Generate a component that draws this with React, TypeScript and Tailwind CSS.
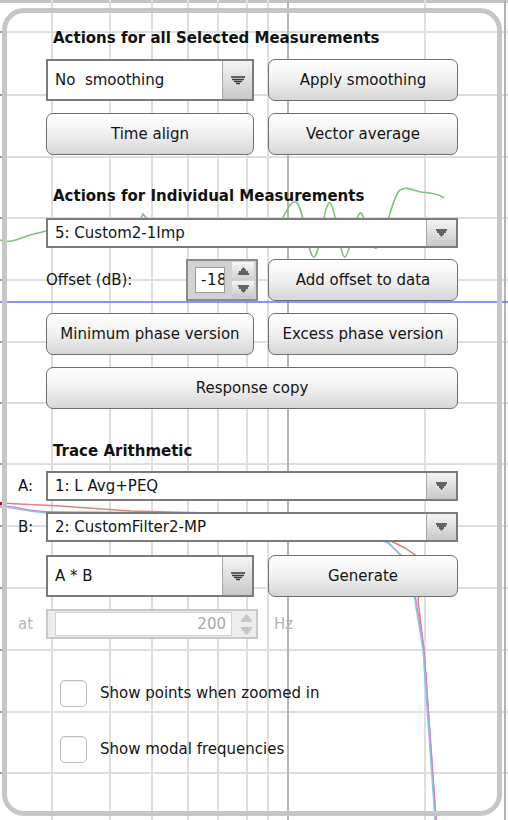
import React from 'react';

const font = {fontFamily: '"DejaVu Sans", "Liberation Sans", sans-serif'};

const hLines = [32, 95, 157, 218, 280, 342, 403, 464, 526, 588, 650, 712, 773];
const vLines = [52, 110, 152, 188, 218, 247, 268, 425];

const Graph: React.FC = () => (
    <svg className="absolute inset-0" width={508} height={820} viewBox="0 0 508 820">
        <rect x={0} y={0} width={508} height={3} fill="#c4c4c4"/>
        {hLines.map((y) => (
            <g key={y}>
                <line x1={0} y1={y} x2={508} y2={y} stroke="#dedede" strokeWidth={2}/>
                <line x1={0} y1={y} x2={3} y2={y} stroke="#9a9a9a" strokeWidth={2}/>
            </g>
        ))}
        {vLines.map((x) => (
            <line key={x} x1={x} y1={0} x2={x} y2={820} stroke="#dedede" strokeWidth={2}/>
        ))}
        <line x1={288} y1={0} x2={288} y2={820} stroke="#b4b4b4" strokeWidth={2}/>
        <line x1={505} y1={0} x2={505} y2={820} stroke="#b4b4b4" strokeWidth={2}/>
        <line x1={0} y1={302} x2={508} y2={302} stroke="#6a6aff" strokeWidth={1.5}/>
        <path
            d="M0 240 C 10 244, 20 238, 30 235 L46 231 L140 220 L143 214 L148 220 L280 222 C 286 214, 290 200, 296 202 C 304 206, 308 258, 314 257 C 320 256, 324 200, 330 203 C 336 206, 340 258, 345 257 C 350 255, 356 210, 361 213 C 366 216, 370 250, 376 248 C 384 245, 392 195, 400 190 C 406 186, 412 190, 421 192 C 428 193, 436 192, 444 198"
            fill="none" stroke="#7cc47c" strokeWidth={1.6}/>
        <path d="M0 503 L60 506 L130 511 L250 514 L340 520 L385 538 L405 548 L418 557 L422 580 L418 600 L424 650 L436 820"
              fill="none" stroke="#e08080" strokeWidth={1.5}/>
        <path d="M0 506 C 20 506, 30 513, 60 512 L200 513 L340 522 L388 543 L404 558 L415 595 L424 650 L436 820"
              fill="none" stroke="#d27ee6" strokeWidth={1.5}/>
        <path d="M0 507 C 20 507, 30 514, 60 513 L200 514 L340 523 L389 543 L403 558 L414 595 L423 650 L435 820"
              fill="none" stroke="#8cc6e2" strokeWidth={1.5}/>
        <rect x={0} y={502} width={3} height={3} fill="#a02020"/>
    </svg>
);

const Arrow: React.FC<{big?: boolean; up?: boolean; faded?: boolean}> = ({big, up, faded}) => {
    const w = big ? 14 : 11;
    const color = faded ? '#b8b8b8' : '#3a3a3a';
    const rows = big
        ? [[0, 14, 1], [1, 13, 3.5], [3, 11, 5.5], [5, 9, 7.5]]
        : [[0, 11, 1], [1, 10, 3], [3, 8, 5], [4.5, 6.5, 6.6]];
    return (
        <svg width={w} height={big ? 9 : 8} viewBox={`0 0 ${w} ${big ? 9 : 8}`}
             style={up ? {transform: 'scaleY(-1)'} : undefined}>
            {rows.map(([a, b, y], i) => (
                <line key={i} x1={a} y1={y} x2={b} y2={y} stroke={color} strokeWidth={1.5}/>
            ))}
        </svg>
    );
};

const Btn: React.FC<{children: React.ReactNode; className?: string}> = ({children, className = ''}) => (
    <div
        className={`h-[42px] rounded-[7px] border-[1.5px] border-[#6f6f6f] bg-linear-to-b from-white via-[#f0f0f0] to-[#d6d6d6] flex items-center justify-center text-[15px] text-[#141414] ${className}`}>
        {children}
    </div>
);

const Combo: React.FC<{label: string; big?: boolean; className?: string}> = ({label, big, className = ''}) => (
    <div
        className={`${big ? 'h-[42px]' : 'h-[30px]'} border-2 border-[#7b7b7b] bg-white flex items-stretch ${className}`}>
        <div className="flex-1 flex items-center pl-[7px] text-[15px] text-[#141414] whitespace-pre">{label}</div>
        <div
            className="w-[30px] border-l border-[#a9a9a9] bg-linear-to-b from-[#f4f4f4] to-[#c9c9c9] flex items-center justify-center">
            <Arrow big={big}/>
        </div>
    </div>
);

const Check: React.FC<{label: string}> = ({label}) => (
    <div className="flex items-center h-[27px] ml-[14px]">
        <div className="w-[27px] h-[27px] rounded-[5px] border border-[#bdbdbd] bg-white shadow-[inset_0_1px_1px_rgba(0,0,0,0.08)]"/>
        <span className="ml-[13px] text-[15px] text-[#141414]">{label}</span>
    </div>
);

const App: React.FC = () => {
    return (
        <div className="relative w-[508px] h-[820px] overflow-hidden bg-white" style={font}>
            <Graph/>
            <div
                className="relative ml-[2px] mt-[8px] w-[500px] h-[808px] rounded-[22px] border-[5px] border-[#c6c6c6] pl-[39px] pr-[39px] pt-[15px]">
                <div className="text-[15px] font-bold text-[#111] leading-[20px] pl-[7px]">
                    Actions for all Selected Measurements
                </div>
                <div className="flex gap-[14px] mt-[11px]">
                    <Combo label="No  smoothing" big className="w-[208px]"/>
                    <Btn className="flex-1">Apply smoothing</Btn>
                </div>
                <div className="flex gap-[14px] mt-[12px]">
                    <Btn className="w-[208px]">Time align</Btn>
                    <Btn className="flex-1">Vector average</Btn>
                </div>

                <div className="text-[15px] font-bold text-[#111] leading-[20px] pl-[7px] mt-[31px]">
                    Actions for Individual Measurements
                </div>
                <Combo label="5: Custom2-1Imp" className="mt-[12px]"/>
                <div className="flex items-center mt-[11px]">
                    <span className="w-[140px] text-[15px] text-[#141414]">Offset (dB):</span>
                    <div className="w-[72px] h-[42px] border-2 border-[#8a8a8a] bg-[#d2d2d2] flex items-center pl-[7px]">
                        <div
                            className="w-[30px] h-[26px] bg-white border border-[#9c9c9c] overflow-hidden flex items-center pl-[5px] text-[15px] text-[#141414] whitespace-nowrap tracking-[0.5px]">
                            -18
                        </div>
                        <div className="ml-[7px] w-[22px] h-[36px] flex flex-col gap-[1px]">
                            <div className="flex-1 bg-linear-to-b from-[#f6f6f6] to-[#cfcfcf] flex items-center justify-center">
                                <Arrow up/>
                            </div>
                            <div className="flex-1 bg-linear-to-b from-[#f6f6f6] to-[#c6c6c6] flex items-center justify-center">
                                <Arrow/>
                            </div>
                        </div>
                    </div>
                    <Btn className="flex-1 ml-[10px]">Add offset to data</Btn>
                </div>
                <div className="flex gap-[14px] mt-[12px]">
                    <Btn className="w-[208px]">Minimum phase version</Btn>
                    <Btn className="flex-1">Excess phase version</Btn>
                </div>
                <Btn className="mt-[12px]">Response copy</Btn>

                <div className="text-[15px] font-bold text-[#111] leading-[20px] pl-[7px] mt-[32px]">
                    Trace Arithmetic
                </div>
                <div className="flex items-center -ml-[28px] mt-[10px]">
                    <span className="w-[28px] text-[15px] text-[#141414]">A:</span>
                    <Combo label="1: L Avg+PEQ" className="flex-1"/>
                </div>
                <div className="flex items-center -ml-[28px] mt-[11px]">
                    <span className="w-[28px] text-[15px] text-[#141414]">B:</span>
                    <Combo label="2: CustomFilter2-MP" className="flex-1"/>
                </div>
                <div className="flex gap-[14px] mt-[13px]">
                    <Combo label="A * B" big className="w-[208px]"/>
                    <Btn className="flex-1">Generate</Btn>
                </div>
                <div className="flex items-center -ml-[28px] mt-[12px]">
                    <span className="w-[28px] text-[15px] text-[#b4b4b4]">at</span>
                    <div className="w-[212px] h-[30px] border-2 border-[#c9c9c9] bg-[#ededed] flex items-center pl-[7px]">
                        <div
                            className="w-[177px] h-[24px] bg-white border border-[#d4d4d4] flex items-center justify-end pr-[5px] text-[15px] text-[#a8a8a8]">
                            200
                        </div>
                        <div className="ml-[6px] w-[16px] h-[26px] flex flex-col">
                            <div className="flex-1 flex items-center justify-center"><Arrow up faded/></div>
                            <div className="flex-1 flex items-center justify-center"><Arrow faded/></div>
                        </div>
                    </div>
                    <span className="ml-[16px] text-[15px] text-[#b4b4b4]">Hz</span>
                </div>

                <div className="mt-[41px]">
                    <Check label="Show points when zoomed in"/>
                </div>
                <div className="mt-[29px]">
                    <Check label="Show modal frequencies"/>
                </div>
            </div>
        </div>
    );
};

export default App;
